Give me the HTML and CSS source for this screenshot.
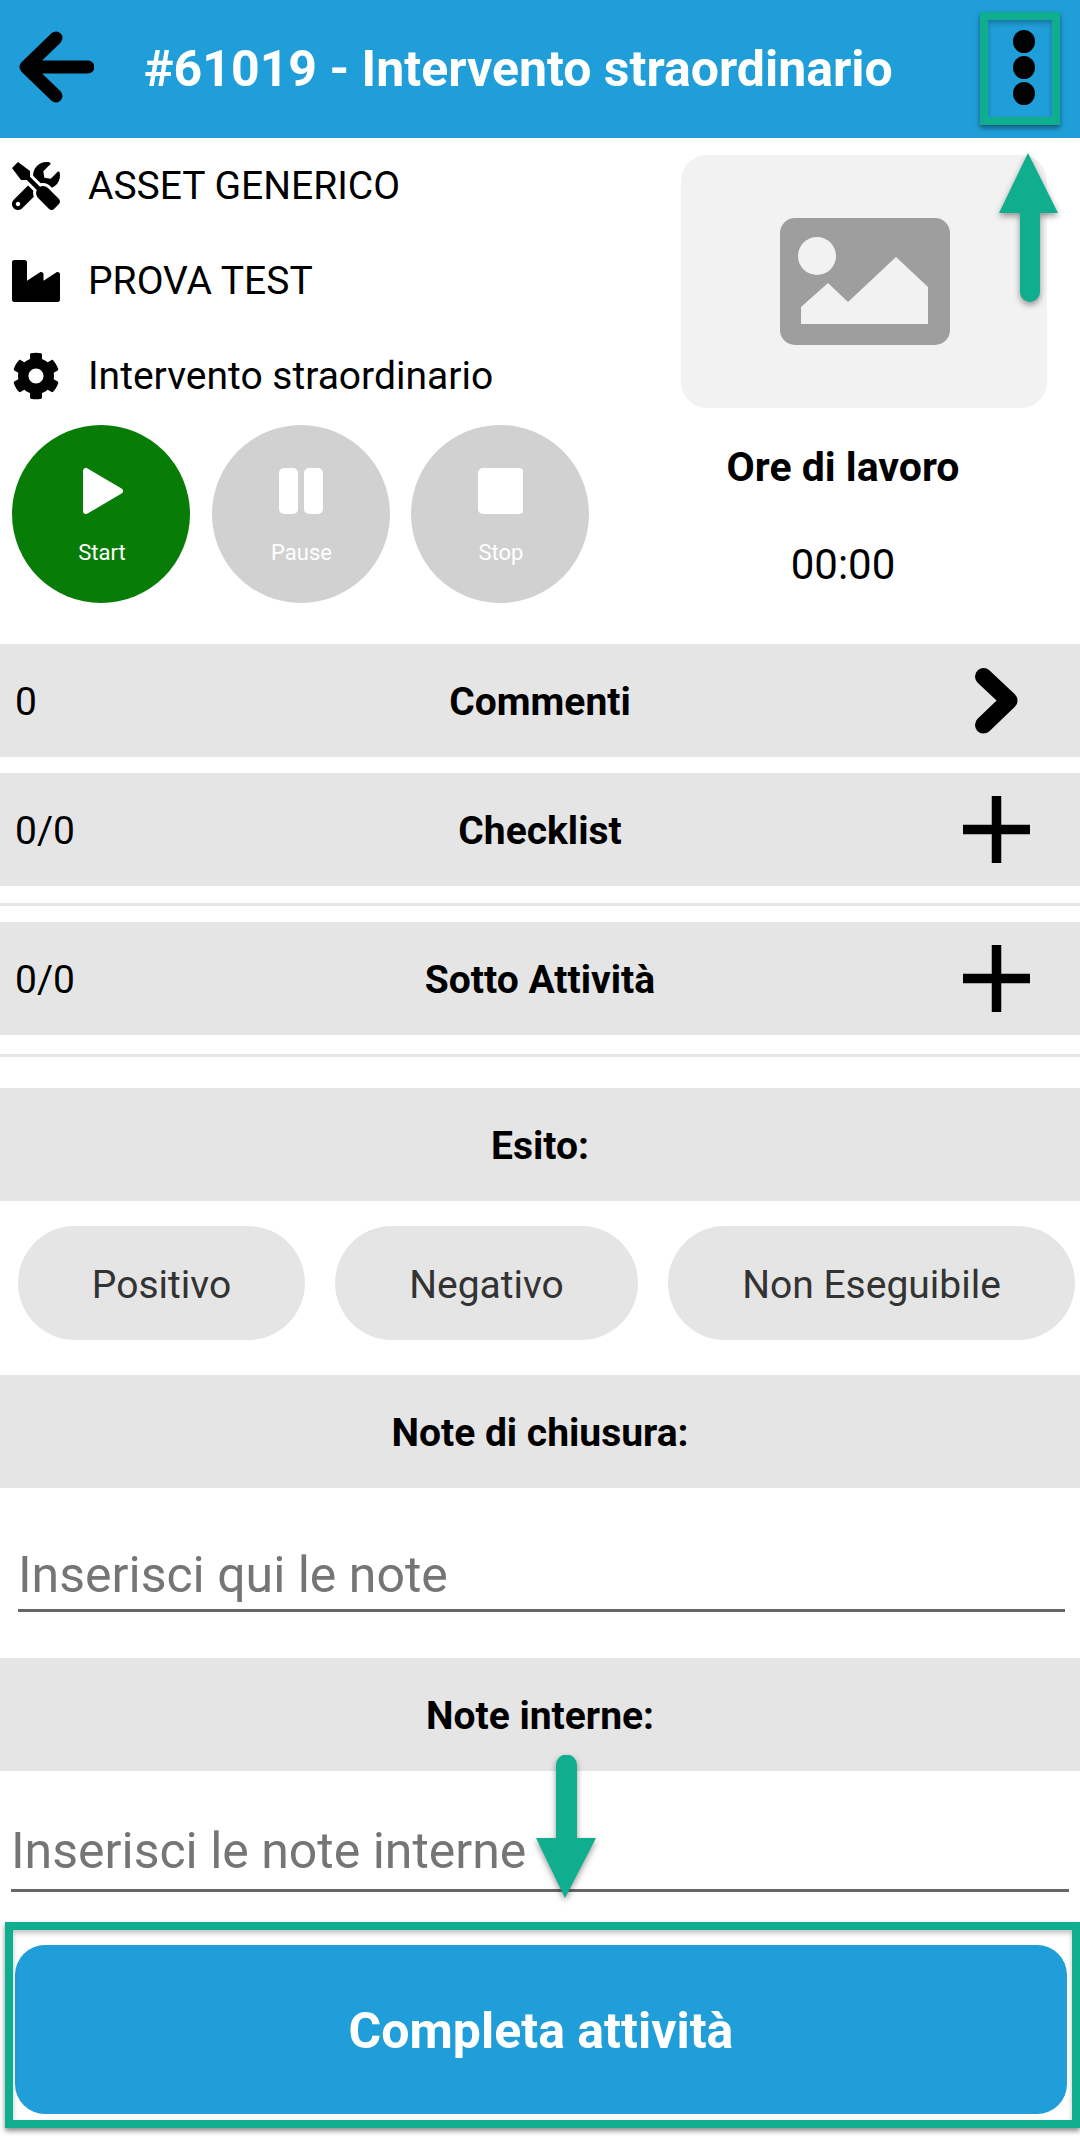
FILE: index.html
```html
<!DOCTYPE html>
<html lang="it">
<head>
<meta charset="utf-8">
<title>#61019 - Intervento straordinario</title>
<link rel="stylesheet" href="styles.css">
</head>
<body>
<div class="page">
  <header class="appbar">
    <svg class="back" viewBox="0 0 76 76"><path d="M70 38H8M38 9 8 38l30 29"/></svg>
    <h1 class="title">#61019 - Intervento straordinario</h1>
    <div class="dots"><span></span><span></span><span></span></div>
  </header>

  <section class="summary">
    <div class="summary-left">
      <div class="info"><svg class="info-icon" viewBox="0 0 512 512"><path d="M501.1 395.7L384 278.6c-23.1-23.1-57.6-27.6-85.4-13.9L192 158.1V96L64 0 0 64l96 128h62.1l106.6 106.6c-13.6 27.8-9.2 62.3 13.9 85.4l117.1 117.1c14.6 14.6 38.2 14.6 52.7 0l52.7-52.7c14.5-14.6 14.5-38.2 0-52.7zM331.7 225c28.3 0 54.9 11 74.9 31l19.4 19.4c15.8-6.9 30.8-16.5 43.8-29.5 37.1-37.1 49.7-89.3 37.9-136.7-2.2-9-13.5-12.1-20.1-5.5l-74.4 74.4-67.9-11.3L334 98.9l74.4-74.4c6.6-6.6 3.4-17.9-5.7-20.2-47.4-11.7-99.6.9-136.6 37.9-28.5 28.5-41.9 66.1-41.2 103.6l82.1 82.1c8.1-1.9 16.5-2.9 24.7-2.9zm-103.9 82l-56.7-56.7L18.7 402.8c-25 25-25 65.5 0 90.5s65.5 25 90.5 0l123.6-123.6c-7.6-19.9-9.9-41.6-5-62.7zM64 472c-13.2 0-24-10.8-24-24 0-13.3 10.7-24 24-24s24 10.7 24 24c0 13.2-10.7 24-24 24z"/></svg><span>ASSET GENERICO</span></div>
      <div class="info"><svg class="info-icon" viewBox="0 32 512 448"><path d="M475.115 163.781L336 252.309v-68.28c0-18.916-20.931-30.399-36.885-20.248L160 252.309V56c0-13.255-10.745-24-24-24H24C10.745 32 0 42.745 0 56v400c0 13.255 10.745 24 24 24h464c13.255 0 24-10.745 24-24V184.029c0-18.917-20.931-30.399-36.885-20.248z"/></svg><span>PROVA TEST</span></div>
      <div class="info"><svg class="info-icon" viewBox="0 0 512 512"><path d="M487.4 315.7l-42.6-24.6c4.3-23.2 4.3-47 0-70.2l42.6-24.6c4.9-2.8 7.1-8.6 5.5-14-11.1-35.6-30-67.8-54.7-94.6-3.8-4.1-10-5.1-14.8-2.3L380.8 110c-17.9-15.4-38.5-27.3-60.8-35.1V25.8c0-5.6-3.9-10.5-9.4-11.7-36.7-8.2-74.3-7.8-109.2 0-5.5 1.2-9.4 6.1-9.4 11.7V75c-22.2 7.9-42.8 19.8-60.8 35.1L88.7 85.5c-4.9-2.8-11-1.9-14.8 2.3-24.7 26.7-43.6 58.9-54.7 94.6-1.7 5.4.6 11.2 5.5 14L67.3 221c-4.3 23.2-4.3 47 0 70.2l-42.6 24.6c-4.9 2.8-7.1 8.6-5.5 14 11.1 35.6 30 67.8 54.7 94.6 3.8 4.1 10 5.1 14.8 2.3l42.6-24.6c17.9 15.4 38.5 27.3 60.8 35.1v49.2c0 5.6 3.9 10.5 9.4 11.7 36.7 8.2 74.3 7.8 109.2 0 5.5-1.2 9.4-6.1 9.4-11.7v-49.2c22.2-7.9 42.8-19.8 60.8-35.1l42.6 24.6c4.9 2.8 11 1.9 14.8-2.3 24.7-26.7 43.6-58.9 54.7-94.6 1.5-5.5-.7-11.3-5.6-14.1zM256 336c-44.1 0-80-35.9-80-80s35.9-80 80-80 80 35.9 80 80-35.9 80-80 80z"/></svg><span>Intervento straordinario</span></div>
      <div class="controls">
        <div class="control control-start">
          <svg class="control-icon" viewBox="0 0 46 48"><path class="play" d="M8 4v40l34-20z"/></svg>
          <span>Start</span>
        </div>
        <div class="control">
          <svg class="control-icon" viewBox="0 0 46 48"><rect x="1" y="1" width="19" height="46" rx="5"/><rect x="26" y="1" width="19" height="46" rx="5"/></svg>
          <span>Pause</span>
        </div>
        <div class="control">
          <svg class="control-icon" viewBox="0 0 46 48"><rect x="1" y="1" width="46" height="46" rx="5"/></svg>
          <span>Stop</span>
        </div>
      </div>
    </div>
    <div class="summary-right">
      <div class="photo">
        <svg class="photo-icon" viewBox="0 0 170 127"><rect width="170" height="127" rx="15" fill="#9e9e9e"/><circle cx="37" cy="38" r="19" fill="#f2f2f2"/><path d="M21 106V89L48 65 68 84 116 39 148 69V106z" fill="#f2f2f2"/></svg>
      </div>
      <div class="hours-label">Ore di lavoro</div>
      <div class="hours-value">00:00</div>
    </div>
  </section>

  <div class="bar">
    <span class="bar-count">0</span><span class="bar-title">Commenti</span>
    <svg class="bar-chevron" viewBox="0 0 44 68"><path d="M9.5 9.5 35 33.5 9.500 58"/></svg>
  </div>
  <div class="bar bar-second">
    <span class="bar-count">0/0</span><span class="bar-title">Checklist</span>
    <svg class="bar-plus" viewBox="0 0 67 67"><path d="M0 33.5h67M33.500 0v67"/></svg>
  </div>
  <div class="divider"></div>
  <div class="bar">
    <span class="bar-count">0/0</span><span class="bar-title">Sotto Attività</span>
    <svg class="bar-plus" viewBox="0 0 67 67"><path d="M0 33.5h67M33.500 0v67"/></svg>
  </div>
  <div class="divider divider-low"></div>

  <div class="heading heading-esito">Esito:</div>
  <div class="pills">
    <div class="pill pill-pos">Positivo</div>
    <div class="pill pill-neg">Negativo</div>
    <div class="pill pill-non">Non Eseguibile</div>
  </div>

  <div class="heading heading-chiusura">Note di chiusura:</div>
  <div class="field field-chiusura">Inserisci qui le note</div>

  <div class="heading heading-interne">Note interne:</div>
  <div class="field field-interne">Inserisci le note interne</div>

  <div class="complete">Completa attività</div>

  <div class="mark mark-menu"></div>
  <div class="mark mark-complete"></div>
  <svg class="pointer pointer-up" viewBox="0 0 60 149"><path d="M29 0l30 60H41v79a10 10 0 0 1-20 0V60H0z"/></svg>
  <svg class="pointer pointer-down" viewBox="0 0 60 143"><path d="M29 143L0 83h20V10a10 10 0 0 1 21 0v73h19z"/></svg>
</div>
</body>
</html>
```

FILE: styles.css
```css
* { box-sizing: border-box; }
html, body { margin: 0; padding: 0; background: #fff; }
.page {
  position: relative;
  width: 1080px;
  height: 2154px;
  overflow: hidden;
  display: flex;
  flex-direction: column;
  font-family: Roboto, "Liberation Sans", sans-serif;
  color: #000;
  background: #fff;
}

.appbar {
  flex: 0 0 138px;
  display: flex;
  align-items: center;
  padding-left: 18px;
  background: #209ed9;
}
.back { width: 76px; height: 76px; margin-bottom: 4px; flex: none; fill: none; stroke: #000; stroke-width: 13; stroke-linecap: round; stroke-linejoin: round; }
.title { margin: 0 0 0 50px; font-size: 50px; font-weight: 700; color: #fff; white-space: nowrap; }
.dots { position: absolute; left: 1013px; top: 30px; display: flex; flex-direction: column; gap: 3px; }
.dots span { width: 22px; height: 23px; border-radius: 50%; background: #000; }

.summary { flex: 0 0 506px; display: flex; }
.summary-left { flex: 0 0 606px; }
.info { height: 95px; display: flex; align-items: center; padding-left: 12px; font-size: 39px; }
.info span { margin-left: 28px; }
.info-icon { width: 48px; height: 48px; flex: none; }
.controls { display: flex; gap: 21.5px; margin: 2px 0 0 12px; }
.control {
  width: 178px;
  height: 178px;
  border-radius: 50%;
  background: #d1d1d1;
  color: #fff;
  font-size: 22px;
  display: flex;
  flex-direction: column;
  align-items: center;
  padding-top: 42px;
}
.control-start { background: #077d07; }
.control-icon { width: 46px; height: 48px; fill: #fff; margin-bottom: 24px; }
.play { stroke: #fff; stroke-width: 6; stroke-linejoin: round; }
.control span { line-height: 27px; margin-left: 2px; }
.summary-right { flex: 1; display: flex; flex-direction: column; align-items: center; }
.photo {
  align-self: flex-end;
  width: 366px;
  height: 253px;
  margin: 17px 33px 0 0;
  padding-left: 2px;
  border-radius: 26px;
  background: #f2f2f2;
  display: flex;
  align-items: center;
  justify-content: center;
}
.photo-icon { width: 170px; height: 127px; }
.hours-label { margin-top: 37px; font-size: 41px; font-weight: 700; line-height: 45px; }
.hours-value { margin-top: 50px; font-size: 42px; line-height: 50px; }

.bar {
  flex: 0 0 113px;
  display: grid;
  grid-template-columns: 1fr auto 1fr;
  align-items: center;
  background: #e5e5e5;
  font-size: 39px;
}
.bar-second { margin-top: 16px; }
.bar-count { padding: 2px 0 0 15px; }
.bar-title { padding-top: 2px; font-weight: 700; }
.bar-chevron { justify-self: end; width: 44px; height: 68px; margin-right: 62px; fill: none; stroke: #000; stroke-width: 17; stroke-linecap: round; stroke-linejoin: round; }
.bar-plus { justify-self: end; width: 67px; height: 67px; margin-right: 50px; fill: none; stroke: #000; stroke-width: 9.5; }
.divider { flex: 0 0 3px; margin: 17px 0 16px; background: #e5e5e5; }
.divider-low { margin: 19px 0 0; }

.heading {
  flex: 0 0 113px;
  display: flex;
  align-items: center;
  justify-content: center;
  padding-top: 3px;
  background: #e5e5e5;
  font-size: 39px;
  font-weight: 700;
}
.heading-esito { margin-top: 31px; }
.heading-chiusura { margin-top: 35px; }
.heading-interne { margin-top: 46px; }

.pills { display: flex; margin: 25px 0 0 18px; height: 114px; }
.pill {
  height: 114px;
  padding-top: 3px;
  border-radius: 57px;
  background: #e5e5e5;
  color: #333;
  font-size: 39px;
  display: flex;
  align-items: center;
  justify-content: center;
}
.pill-pos { width: 287px; }
.pill-neg { width: 303px; margin-left: 30px; }
.pill-non { width: 407px; margin-left: 30px; }

.field { color: #757575; font-size: 50px; border-bottom: 3px solid #666; }
.field-chiusura { margin: 61px 15px 0 18px; line-height: 52px; padding-bottom: 8px; }
.field-interne { margin: 0 11px; height: 121px; padding-top: 50px; line-height: 60px; }

.complete {
  height: 169px;
  margin: 53px 13px 0 15px;
  padding-top: 2px;
  border-radius: 30px;
  background: #209ed9;
  color: #fff;
  font-size: 50px;
  font-weight: 700;
  display: flex;
  align-items: center;
  justify-content: center;
}

.mark { position: absolute; border: 8px solid #0fae8f; box-shadow: 0 3px 5px rgba(0,0,0,.45), inset 0 3px 5px rgba(0,0,0,.25); }
.mark-menu { left: 980px; top: 12px; width: 80px; height: 113px; }
.mark-complete { left: 5px; top: 1922px; width: 1075px; height: 206px; }
.pointer { position: absolute; fill: #0fae8f; filter: drop-shadow(0 3px 3px rgba(0,0,0,.4)); }
.pointer-up { left: 999px; top: 153px; width: 60px; height: 149px; }
.pointer-down { left: 536px; top: 1755px; width: 60px; height: 143px; }
```
